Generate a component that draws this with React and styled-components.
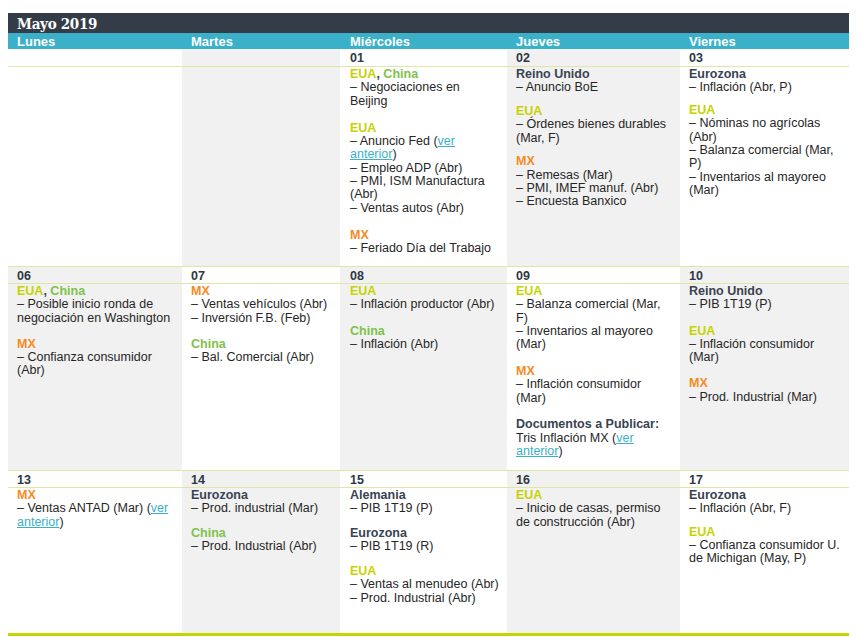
import React from "react";
import styled, { createGlobalStyle } from "styled-components";

const COLS = "174px 158px 167px 173px 169px";
const PADS = [9, 9, 10, 9, 9];
const LINE = "#e0e7a6";
const GRAY = "#f1f1f1";

const GlobalStyle = createGlobalStyle`
  body {
    margin: 8px;
    background: #fff;
    font-family: "Liberation Sans", Arial, sans-serif;
  }
`;

const Calendar = styled.div`
  width: 841px;
  margin-top: 5px;
`;

const TitleBar = styled.div`
  height: 20px;
  box-sizing: border-box;
  padding: 1px 0 0 9px;
  background: #343c47;
  color: #fff;
  font-family: "DejaVu Serif Condensed", "DejaVu Serif", serif;
  font-stretch: condensed;
  font-weight: bold;
  font-size: 15px;
  line-height: 20px;
  letter-spacing: -0.3px;
`;

const HeaderRow = styled.div`
  display: grid;
  grid-template-columns: ${COLS};
  height: 16px;
  background: #3ab0c9;
`;

const DayName = styled.div`
  padding-left: ${(p) => p.$pad}px;
  color: #fff;
  font-weight: bold;
  font-size: 13px;
  line-height: 17px;
`;

const Week = styled.div`
  display: grid;
  grid-template-columns: ${COLS};
  height: ${(p) => p.$h}px;
  box-sizing: border-box;
  border-top: ${(p) => (p.$top ? `1px solid ${LINE}` : "none")};
`;

const Day = styled.div`
  display: flex;
  flex-direction: column;
  background: ${(p) => (p.$shade ? GRAY : "#fff")};
`;

const DateNum = styled.div`
  height: ${(p) => p.$dh}px;
  box-sizing: border-box;
  flex: none;
  border-bottom: 1px solid ${LINE};
  padding: 1px 0 0 ${(p) => p.$pad}px;
  color: #2f3744;
  font-weight: bold;
  font-size: 12.5px;
  line-height: ${(p) => p.$dh - 1}px;
`;

const Content = styled.div`
  display: flex;
  flex-direction: column;
  gap: ${(p) => p.$gap}px;
  padding: ${(p) => p.$top}px 2px 0 ${(p) => p.$pad}px;
  color: #262626;
  font-size: 12.5px;
  line-height: 13.3px;
`;

const Group = styled.div``;

const Region = styled.div`
  font-weight: bold;
  color: #3a4352;
`;

const TAG_COLORS = {
  eua: "#c6d300",
  china: "#7fc24a",
  mx: "#f68b1f",
  other: "#3a4352",
};

const Tag = styled.span`
  color: ${(p) => TAG_COLORS[p.$kind]};
`;

const Item = styled.div`
  white-space: pre-line;
`;

const Link = styled.a`
  color: #3ab0c9;
  text-decoration: underline;
`;

const BottomRule = styled.div`
  height: 3px;
  background: #c5d500;
`;

const link = (before, after) => (
  <>
    {before}
    <Link href="#">ver</Link>
    {"\n"}
    <Link href="#">anterior</Link>
    {after}
  </>
);

const EUA = ["eua"];
const CHINA = ["china"];
const MX = ["mx"];
const EUA_CHINA = ["eua", "china"];
const NAMES = { eua: "EUA", china: "China", mx: "MX" };

const weeks = [
  {
    h: 217,
    dh: 18,
    top: false,
    pt: 1,
    days: [
      { shade: false, date: "", gap: 13, groups: [] },
      { shade: true, date: "", gap: 13, groups: [] },
      {
        shade: false,
        date: "01",
        gap: 14,
        groups: [
          { tags: EUA_CHINA, items: ["– Negociaciones en\nBeijing"] },
          {
            tags: EUA,
            items: [
              link("– Anuncio Fed (", ")"),
              "– Empleo ADP (Abr)",
              "– PMI, ISM Manufactura\n(Abr)",
              "– Ventas autos (Abr)",
            ],
          },
          { tags: MX, items: ["– Feriado Día del Trabajo"] },
        ],
      },
      {
        shade: true,
        date: "02",
        gap: 10.5,
        groups: [
          { title: "Reino Unido", items: ["– Anuncio BoE"] },
          { tags: EUA, items: ["– Órdenes bienes durables\n(Mar, F)"] },
          {
            tags: MX,
            items: ["– Remesas (Mar)", "– PMI, IMEF manuf. (Abr)", "– Encuesta Banxico"],
          },
        ],
      },
      {
        shade: false,
        date: "03",
        gap: 9.5,
        groups: [
          { title: "Eurozona", items: ["– Inflación (Abr, P)"] },
          {
            tags: EUA,
            items: [
              "– Nóminas no agrícolas\n(Abr)",
              "– Balanza comercial (Mar,\nP)",
              "– Inventarios al mayoreo\n(Mar)",
            ],
          },
        ],
      },
    ],
  },
  {
    h: 204,
    dh: 17,
    top: true,
    pt: 1,
    days: [
      {
        shade: true,
        date: "06",
        gap: 13,
        groups: [
          { tags: EUA_CHINA, items: ["– Posible inicio ronda de\nnegociación en Washington"] },
          { tags: MX, items: ["– Confianza consumidor\n(Abr)"] },
        ],
      },
      {
        shade: false,
        date: "07",
        gap: 13,
        groups: [
          { tags: MX, items: ["– Ventas vehículos (Abr)", "– Inversión F.B. (Feb)"] },
          { tags: CHINA, items: ["– Bal. Comercial (Abr)"] },
        ],
      },
      {
        shade: true,
        date: "08",
        gap: 13,
        groups: [
          { tags: EUA, items: ["– Inflación productor (Abr)"] },
          { tags: CHINA, items: ["– Inflación (Abr)"] },
        ],
      },
      {
        shade: false,
        date: "09",
        gap: 13.5,
        groups: [
          {
            tags: EUA,
            items: ["– Balanza comercial (Mar,\nF)", "– Inventarios al mayoreo\n(Mar)"],
          },
          { tags: MX, items: ["– Inflación consumidor\n(Mar)"] },
          {
            title: "Documentos a Publicar:",
            items: [link("Tris Inflación MX (", ")")],
          },
        ],
      },
      {
        shade: true,
        date: "10",
        gap: 13,
        groups: [
          { title: "Reino Unido", items: ["– PIB 1T19 (P)"] },
          { tags: EUA, items: ["– Inflación consumidor\n(Mar)"] },
          { tags: MX, items: ["– Prod. Industrial (Mar)"] },
        ],
      },
    ],
  },
  {
    h: 163,
    dh: 17,
    top: true,
    pt: 1,
    days: [
      {
        shade: false,
        date: "13",
        gap: 11,
        groups: [{ tags: MX, items: [link("– Ventas ANTAD (Mar) (", ")")] }],
      },
      {
        shade: true,
        date: "14",
        gap: 11,
        groups: [
          { title: "Eurozona", items: ["– Prod. industrial (Mar)"] },
          { tags: CHINA, items: ["– Prod. Industrial (Abr)"] },
        ],
      },
      {
        shade: false,
        date: "15",
        gap: 11.5,
        groups: [
          { title: "Alemania", items: ["– PIB 1T19 (P)"] },
          { title: "Eurozona", items: ["– PIB 1T19 (R)"] },
          { tags: EUA, items: ["– Ventas al menudeo (Abr)", "– Prod. Industrial (Abr)"] },
        ],
      },
      {
        shade: true,
        date: "16",
        gap: 11,
        groups: [{ tags: EUA, items: ["– Inicio de casas, permiso\nde construcción (Abr)"] }],
      },
      {
        shade: false,
        date: "17",
        gap: 10,
        groups: [
          { title: "Eurozona", items: ["– Inflación (Abr, F)"] },
          { tags: EUA, items: ["– Confianza consumidor U.\nde Michigan (May, P)"] },
        ],
      },
    ],
  },
];

const DAY_NAMES = ["Lunes", "Martes", "Miércoles", "Jueves", "Viernes"];

function RegionLabel({ group }) {
  if (group.title) return <Region>{group.title}</Region>;
  return (
    <Region>
      {group.tags.map((t, i) => (
        <React.Fragment key={t}>
          {i > 0 && <Tag $kind="other">, </Tag>}
          <Tag $kind={t}>{NAMES[t]}</Tag>
        </React.Fragment>
      ))}
    </Region>
  );
}

export default function App() {
  return (
    <>
      <GlobalStyle />
      <Calendar>
        <TitleBar>Mayo 2019</TitleBar>
        <HeaderRow>
          {DAY_NAMES.map((n, i) => (
            <DayName key={n} $pad={PADS[i]}>
              {n}
            </DayName>
          ))}
        </HeaderRow>
        {weeks.map((w, wi) => (
          <Week key={wi} $h={w.h} $top={w.top}>
            {w.days.map((d, di) => (
              <Day key={di} $shade={d.shade}>
                <DateNum $pad={PADS[di]} $dh={w.dh}>
                  {d.date}
                </DateNum>
                <Content $pad={PADS[di]} $gap={d.gap} $top={w.pt}>
                  {d.groups.map((g, gi) => (
                    <Group key={gi}>
                      <RegionLabel group={g} />
                      {g.items.map((it, ii) => (
                        <Item key={ii}>{it}</Item>
                      ))}
                    </Group>
                  ))}
                </Content>
              </Day>
            ))}
          </Week>
        ))}
        <BottomRule />
      </Calendar>
    </>
  );
}
